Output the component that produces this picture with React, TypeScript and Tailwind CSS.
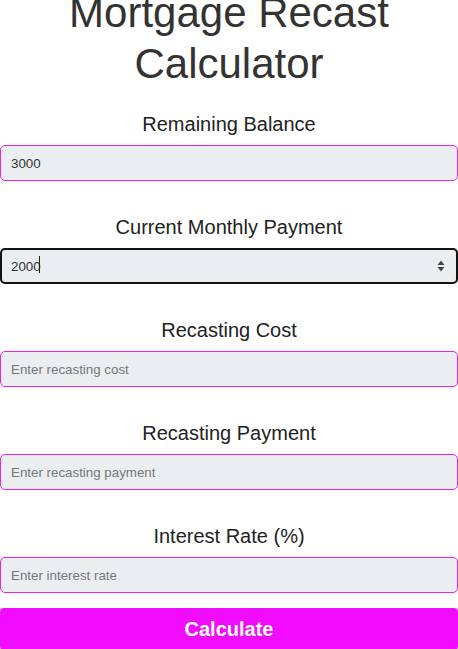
const fields = [
  { label: "Remaining Balance", value: "3000", placeholder: "Enter remaining balance" },
  { label: "Current Monthly Payment", value: "2000", placeholder: "Enter monthly payment", focused: true },
  { label: "Recasting Cost", value: "", placeholder: "Enter recasting cost" },
  { label: "Recasting Payment", value: "", placeholder: "Enter recasting payment" },
  { label: "Interest Rate (%)", value: "", placeholder: "Enter interest rate" },
];

export default function App() {
  return (
    <div className="w-[458px] bg-white font-['Liberation_Sans',Arial,sans-serif] text-[#333]">
      <h1 className="-mt-[13px] text-center text-[42px] leading-[51px] font-normal text-[#333]">
        Mortgage Recast
        <br />
        Calculator
      </h1>

      <form className="mt-[20px] flex flex-col" onSubmit={(e) => e.preventDefault()}>
        {fields.map((f, i) => (
          <div key={f.label} className={i === 0 ? "flex flex-col" : "mt-[31px] flex flex-col"}>
            <label className="mb-[6px] block text-center text-[20px] leading-[30px] text-[#222]">
              {f.label}
            </label>
            {f.focused ? (
              <div className="relative">
                <input
                  type="text"
                  defaultValue={f.value}
                  placeholder={f.placeholder}
                  className="box-border h-[36px] w-full rounded-[5px] border-2 border-[#121212] bg-[#ebeef0] pl-[9px] text-[13.33px] text-[#333] outline-none"
                />
                <span className="absolute top-[8px] left-[39px] h-[17px] w-px bg-[#222]" />
                <svg
                  className="absolute top-[12px] right-[13px]"
                  width="8"
                  height="12"
                  viewBox="0 0 8 12"
                >
                  <path d="M4 0.5 L7.5 5 L0.5 5 Z" fill="#444" />
                  <path d="M4 11.5 L7.5 7 L0.5 7 Z" fill="#444" />
                </svg>
              </div>
            ) : (
              <input
                type="text"
                defaultValue={f.value}
                placeholder={f.placeholder}
                className="box-border h-[36px] w-full rounded-[5px] border border-[#ea22ea] bg-[#ebeef0] px-[10px] text-[13.33px] text-[#333] placeholder:text-[#777] outline-none"
              />
            )}
          </div>
        ))}

        <button
          type="submit"
          className="mt-[15px] w-full rounded-[4px] bg-[#f20cfd] py-[6px] text-center text-[20px] leading-[30px] font-bold text-white"
        >
          Calculate
        </button>
      </form>
    </div>
  );
}
